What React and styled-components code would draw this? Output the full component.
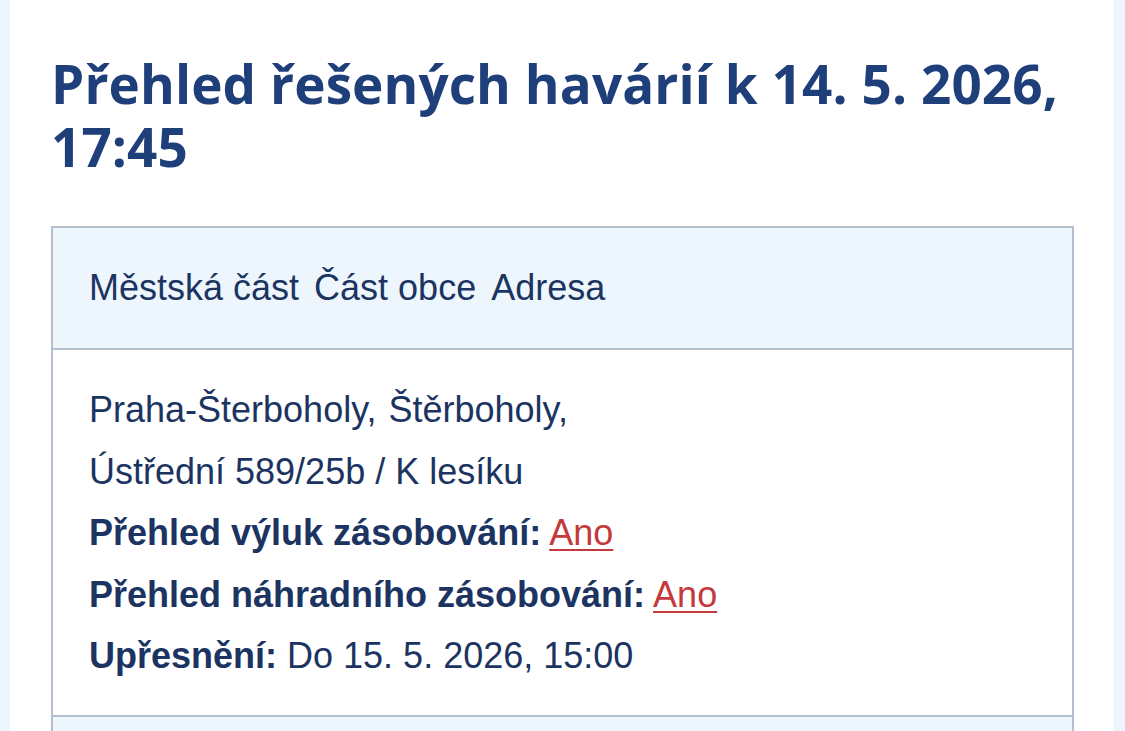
import React from "react";
import styled, { createGlobalStyle } from "styled-components";

const Global = createGlobalStyle`
  html, body {
    margin: 0;
    padding: 0;
    background: #eef6fd;
  }
  body {
    font-family: "Liberation Sans", Arial, sans-serif;
  }
`;

const Page = styled.div`
  margin: 0 12px 0 10px;
  height: 731px;
  overflow: hidden;
  background: #ffffff;
  padding: 52px 39px 0 41px;
  box-sizing: border-box;
`;

const Title = styled.h1`
  margin: 0 0 48px;
  font-family: "Open Sans", "Noto Sans", sans-serif;
  font-weight: 700;
  font-size: 53px;
  line-height: 63px;
  letter-spacing: 0.1px;
  color: #1f3f7b;
`;

const Table = styled.div`
  border: 2px solid #b3bfcd;
  border-bottom: none;
`;

const Head = styled.div`
  display: flex;
  gap: 15px;
  align-items: center;
  height: 120px;
  padding: 0 36px;
  background: #eef6fd;
  border-bottom: 2px solid #b3bfcd;
  font-size: 36px;
  color: #1c3461;
`;

const Row = styled.div`
  padding: 29px 36px 28px;
  border-bottom: 2px solid #b3bfcd;
  font-size: 36px;
  line-height: 61.5px;
  color: #1c3461;
  background: ${(p) => (p.$shade ? "#eef6fd" : "#ffffff")};
  min-height: ${(p) => (p.$shade ? "40px" : "auto")};
`;

const Line = styled.div`
  display: flex;
  flex-wrap: wrap;
  column-gap: 12px;
`;

const Field = styled.div``;

const Label = styled.strong`
  font-weight: 700;
`;

const Link = styled.a`
  color: #c4393b;
  text-decoration: underline;
  text-underline-offset: 4px;
  text-decoration-thickness: 2px;
`;

export default function App() {
  return (
    <>
      <Global />
      <Page>
        <Title>Přehled řešených havárií k 14. 5. 2026, 17:45</Title>
        <Table>
          <Head>
            <span>Městská část</span>
            <span>Část obce</span>
            <span>Adresa</span>
          </Head>
          <Row>
            <Line>
              <span>Praha-Šterboholy,</span>
              <span>Štěrboholy,</span>
            </Line>
            <Line>
              <span>Ústřední 589/25b / K lesíku</span>
            </Line>
            <Field>
              <Label>Přehled výluk zásobování:</Label> <Link href="#">Ano</Link>
            </Field>
            <Field>
              <Label>Přehled náhradního zásobování:</Label>{" "}
              <Link href="#">Ano</Link>
            </Field>
            <Field>
              <Label>Upřesnění:</Label> Do 15. 5. 2026, 15:00
            </Field>
          </Row>
          <Row $shade />
        </Table>
      </Page>
    </>
  );
}
